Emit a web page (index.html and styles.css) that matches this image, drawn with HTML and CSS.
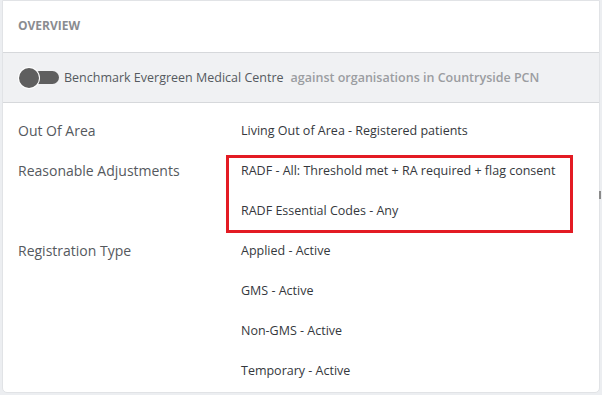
FILE: index.html
```html
<!DOCTYPE html>
<html>
<head>
<meta charset="utf-8">
<link rel="stylesheet" href="styles.css">
</head>
<body>
<div class="card">
  <div class="card-header">OVERVIEW</div>
  <div class="bench">
    <span class="toggle"><span class="knob"></span></span>
    <span class="bench-name">Benchmark Evergreen Medical Centre</span>
    <span class="bench-scope">against organisations in Countryside PCN</span>
  </div>
  <div class="rows">
    <div class="row">
      <div class="label">Out Of Area</div>
      <div class="values">
        <div class="value">Living Out of Area - Registered patients</div>
      </div>
    </div>
    <div class="row">
      <div class="label">Reasonable Adjustments</div>
      <div class="values highlighted">
        <div class="value">RADF - All: Threshold met + RA required + flag consent</div>
        <div class="value">RADF Essential Codes - Any</div>
      </div>
    </div>
    <div class="row">
      <div class="label">Registration Type</div>
      <div class="values">
        <div class="value">Applied - Active</div>
        <div class="value">GMS - Active</div>
        <div class="value">Non-GMS - Active</div>
        <div class="value">Temporary - Active</div>
      </div>
    </div>
  </div>
  <span class="scroll-mark"></span>
</div>
</body>
</html>
```

FILE: styles.css
```css
*, *::before, *::after { box-sizing: border-box; }
html, body { margin: 0; padding: 0; }
body {
  background: #eceef1;
  font-family: "Open Sans", "Liberation Sans", sans-serif;
  width: 602px;
  height: 395px;
  overflow: hidden;
}
.card {
  position: relative;
  margin: 0 2px;
  height: 393px;
  background: #fff;
  border: 1px solid #e1e3e6;
  border-radius: 0 0 5px 5px;
}
.card-header {
  height: 51px;
  padding-left: 15px;
  display: flex;
  align-items: center;
  font-size: 12px;
  font-weight: 700;
  color: #8a8c90;
  padding-bottom: 2px;
}
.bench {
  height: 51px;
  background: #f0f1f3;
  border-top: 1px solid #d6d8db;
  border-bottom: 1px solid #d6d8db;
  display: flex;
  align-items: center;
  padding-left: 16px;
  font-size: 12.5px;
}
.toggle {
  position: relative;
  width: 40px;
  height: 20px;
  margin-right: 5px;
  display: inline-block;
}
.toggle::before {
  content: "";
  position: absolute;
  left: 14px;
  top: 3.5px;
  width: 26px;
  height: 13px;
  border-radius: 7px;
  background: #5f5f5f;
}
.knob {
  position: absolute;
  left: 0;
  top: 0;
  width: 20px;
  height: 20px;
  border-radius: 50%;
  background: #5f5f5f;
  box-shadow: 0 0 0 1px #fff;
}
.bench-name { color: #555a60; }
.bench-scope {
  color: #9b9da1;
  font-weight: 600;
  margin-left: 7px;
}
.rows { padding-top: 7px; }
.row {
  display: grid;
  grid-template-columns: 238px 1fr;
}
.label {
  height: 40px;
  display: flex;
  align-items: center;
  padding-left: 15px;
  font-size: 14px;
  color: #55595e;
}
.values { position: relative; }
.value {
  height: 40px;
  display: flex;
  align-items: center;
  font-size: 12.5px;
  color: #35383d;
}
.highlighted::after {
  content: "";
  position: absolute;
  left: -15px;
  top: 5px;
  width: 347px;
  height: 78px;
  border: 3.5px solid #e31b23;
}
.scroll-mark {
  position: absolute;
  right: -2px;
  top: 190px;
  width: 2px;
  height: 8px;
  background: #8a8a8a;
}
```
